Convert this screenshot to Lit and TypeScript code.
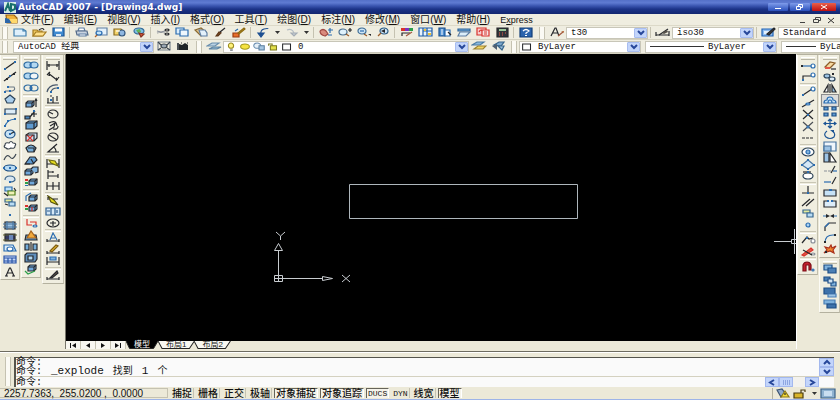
import { LitElement, html, svg, css, nothing } from "lit";
import { customElement, property } from "lit/decorators.js";

// [path data, fill, stroke]
type Shape = [string, string?, string?];

const K = "#26282c";
const B = "#2a6cb0";
const L = "#a9d2f2";
const W = "#ffffff";
const Y = "#f2c230";
const G = "#8a8f98";
const R = "#d8322c";
const N = "none";
const M = "#5f7fa3";

const dot = (x: number, y: number, c = B): Shape => [`M${x - 1} ${y - 1}h2v2h-2z`, c];
const oval = (x: number, y: number, rx: number, ry: number) =>
  `M${x - rx} ${y}a${rx} ${ry} 0 1 0 ${2 * rx} 0a${rx} ${ry} 0 1 0 ${-2 * rx} 0z`;
const cube = (x: number, y: number): Shape[] => [
  [`M${x} ${y + 2}l2-2h6v4l-2 2h-6z`, "#6fa8dc", K],
  [`M${x} ${y + 2}h6v4M${x + 6} ${y + 2}l2-2`, N, K],
];

const ICONS: Record<string, Shape[]> = {
  new: [["M2 2h9l3 2v5H2z", "#dff0fb", "#3f7fae"], ["M11 2v2h3", N, "#3f7fae"]],
  open: [["M2 9V3h4l1 1h4v5z", "#f0c860", "#a27a20"], ["M2 9l3-4h10l-3 4z", "#ffe08a", "#a27a20"], ["M8 3q4-3 5 0", N, K]],
  save: [["M3 1h11v8H3z", "#3f8ad0", "#1c5594"], ["M5 1.500h7v3H5z", W], ["M6 7h5v2H6z", "#d9e8f6"]],
  print: [["M5 1h5l1 3H4z", W, M], ["M2 4h11l1 4H3z", "#c9d3e0", "#546a88"], ["M5 7h7v2H5z", W, M]],
  preview: [["M4 1h10v7H4z", "#e4f1fb", M], [oval(6, 6, 3, 2), "#c2e3f8", B], ["M4 8l-2 2", N, "#b0622a"]],
  publish: [["M2 2h7l3 3-3 3H2z", "#f4d36a", "#8a6d20"], [oval(10, 6, 3, 3), "#8fb7e0", "#34577e"], ["M4 4h4", N, W]],
  globe: [[oval(8, 4, 5, 3), "#7fbfe6", "#356b98"], ["M5 3l4-1 1 3-3 1z", "#5fb35a"], ["M8 6l5 1-3 3z", "#d65a3a", "#843020"]],
  cut: [["M2 4l8 2M2 6l8-2", N, G], [oval(12, 3, 2, 1), N, K], [oval(12, 7, 2, 1), N, K]],
  copy: [["M2 1h8v6H2z", "#dceefb", B], ["M6 3h8v6H6z", "#eef7fd", B]],
  paste: [["M2 3l6-2 5 4-5 4z", "#e0c187", "#8a6a34"], ["M6 3h6l2 3v3H8z", "#e3f1fb", M]],
  match: [["M4 9l3-4 2 1-3 3z", "#7a4a22", "#5a3416"], ["M8 5l5-4", N, K]],
  edit: [["M2 6h6v4H2z", "#e76f2d", "#9b3d12"], ["M7 6l6-5 1 1-6 5z", Y, "#8c6a13"], ["M4 4l3-2", N, B]],
  undo: [["M6 8q-1-5 3-6t4 0", N, "#1d4f91"], ["M3 6h6l-3 4z", "#1d4f91", "#1d4f91"]],
  redo: [["M3 3q5-2 7 3", N, "#b5bdc4"], ["M7 6h6l-3 3z", "#c5ccd2", "#a5adb5"]],
  pan: [["M2 4q3-3 6 0l2 3-3 2q-5-1-5-5", "#d98a7d", "#a14a44"], ["M10 3h5M12 1v5M10 8h4", N, B]],
  zoomrt: [[oval(6, 5, 4, 3), "#dff1fb", "#4a6f90"], ["M9 7l3 2", N, "#9b5a26"], ["M11 3h4M13 1v4", N, K]],
  zoomwin: [[oval(6, 4, 4, 3), "#cfe6f6", "#3e6d96"], ["M8 7l3 2", N, "#9b5a26"], ["M4 4h4", N, B], ["M12 7h3v2z", K]],
  zoomprev: [[oval(9, 4, 4, 3), "#cfe6f6", "#2d5c85"], ["M6 6l-3 3", N, "#9b5a26"], ["M6 4l4-2v4z", K]],
  props: [["M2 1h4v3H2z", R], ["M6 1h4v3H6z", "#7a35c2"], ["M10 1h4v3h-4z", "#2ca04a"], ["M3 9V6h8", N, K], ["M7 9l6-4", "#e6a07a", "#a2563c"]],
  dcenter: [["M1 1h13v8H1z", "#e9f3fc", "#1f5da6"], ["M5 1v8M5 4h9M9 1v8", N, "#1f5da6"], ["M6 2h2v2H6zM10 6h3v2h-3z", Y]],
  palettes: [["M2 1h6v8H2z", "#4d8fd2", "#1b4f8c"], ["M8 3h5v6H8z", W, B], ["M4 3h2M4 5h2M4 7h2", N, W], ["M11 5l3 3", N, K]],
  sheet: [["M2 2h12v2H2z", "#6aa4d8", "#2f669a"], ["M4 5h10l-4 4H2z", "#dbeefa", M]],
  markup: [["M2 1h9v7H2z", "#f8cfcf", R], ["M4 5q2-4 4 0", N, R], ["M7 3h7v6H7z", "#f7e4e4", R], ["M9 5h3M9 7h3", N, R]],
  calc: [["M3 1h11v9H3z", "#31343a", K], ["M5 2h7v2H5z", "#9bc79a"], ["M5 6h1M8 6h1M11 6h1M5 8h1M8 8h1", N, "#e25a4a"]],
  help: [["M2 1h12v9H2z", "#2b64ad", "#123e78"], ["M5 4q3-3 6 0l-3 2v1", N, W], ["M7 8h2v1H7z", W]],
  style: [["M2 9l4-8h1l3 8M4 6h5", N, K], ["M9 9l5-4", N, "#a2563c"], ["M12 4h3v2z", "#b8754c"]],
  dim: [["M1 9V5M1 8h13M14 9V4", N, K], ["M4 8l9-6", N, K], ["M7 6l5-3 1 2-4 2z", "#55504a"]],
  tstyle: [["M1 2h11v7H1z", "#8fbdf0", "#1e62b5"], ["M3 4h7v3H3z", "#e3f0fc"], ["M6 7l7-6 1 1-6 6z", "#444444", K]],
  gear: [["M2 1h12v8H2z", N, "#7a8590"], [oval(8, 5, 3, 2), "#9ba8b5", "#3c4650"], ["M2 1l3 3M14 1l-3 3M2 9l3-2M14 9l-3-2", N, "#3c4650"]],
  flag: [["M2 2h2v7H2z", "#4a5056"], ["M4 3l3 1 3-2 3 2v5H4z", "#1f2428"], ["M6 2h1M12 2h1", N, K]],
  layers: [["M1 5l5-3h7l-4 3z", "#bcd3e4", "#6a8fae"], ["M3 8l4-2h8l-4 2z", "#8fb2cd", "#5c83a3"]],
  layerprev: [["M1 4l5-3h7l-4 3z", "#8ab9de", "#4a7ba3"], ["M3 8l4-3h8l-3 3z", "#f1d564", "#9b8230"]],
  layerstate: [["M4 4l5-3h5l-3 4z", "#7ba7cc", "#37658c"], ["M2 5l5-2v6z", "#4e5f70"], ["M8 5h6l-2 4z", "#9cc0dc", "#37658c"]],
  bulb: [[oval(8, 4, 3, 3), "#fff27a", "#9a8b22"], ["M7 8h3v2H7z", G]],
  sun: [[oval(8, 5, 5, 3), "#f6e341", "#a69b1c"]],
  freeze: [[oval(6, 4, 4, 3), "#e6f0f8", "#6c8fb0"], ["M8 4h6v5H8z", "#a7c7e2", "#5b7f9f"]],
  lock: [["M3 4V2h4v2", N, "#7c7a20"], ["M5 4h7v5H5z", "#e3e04a", "#7c7a20"]],
  swatch: [["M3 2h9v7H3z", W, K]],
  app: [["M2 1h8l3 3v5H3z", "#f1b33b", "#9c6412"], ["M1 4l5 1 1 4H1z", "#2c66a9"], ["M5 5h8v4H8z", "#ffd96b"]],
  // drawing tools
  line: [["M3 9L13 2", N, K], dot(3, 9), dot(13, 2)],
  xline: [["M2 10L14 1", N, K], dot(5, 8, K), dot(12, 3, K), dot(8, 5)],
  pline: [["M3 8h7q4-1 2-4H7", N, "#6b7884"], dot(3, 9), dot(8, 8), dot(6, 4)],
  polygon: [["M8 1l5 4-2 4H5L3 5z", "#a8cdec", "#2b4258"]],
  rect: [["M3 3h11v5H3z", "#dcecf8", "#2b4258"], dot(3, 8), dot(14, 3)],
  arc: [["M3 10q1-7 10-8", N, B], dot(3, 9), dot(13, 2), dot(6, 4)],
  circle: [[oval(8, 5, 5, 4), "#c6e2f6", "#1c4f86"], ["M8 5l4-2", N, K], dot(8, 5)],
  cloud: [["M4 8q-3-1-1-3 0-3 4-2 2-3 4 0 4 0 2 3 0 3-4 2-3 2-5 0z", W, "#3c4650"]],
  spline: [["M2 8q3-7 6-3t6-3", N, "#3c4650"]],
  ellipse: [[oval(8, 5, 6, 3), "#b7dbf4", "#1c4f86"], dot(2, 5), dot(14, 5), dot(8, 5)],
  earc: [["M3 6q0-4 5-4t5 4q-1 2-5 2", "#d8e6f0", "#3d668c"], dot(8, 8)],
  insert: [["M3 1h7v4H3z", "#bfe0f6", B], ["M6 5h7v4H6z", "#eff0b8", "#53801c"], ["M2 7l4 3M12 2l2 3", N, K]],
  block: [["M3 2h7v3H3z", "#e3ea9c", "#36668f"], ["M7 5h6v4H7z", "#b8dcf4", "#36668f"], ["M3 7l3 1", N, K]],
  point: [dot(8, 6)],
  hatch: [["M3 2h10v7H3z", "#9cc3e4", K], ["M1 4h14M1 7h14M5 1v9M11 1v9", N, "#48749e"]],
  gradient: [["M3 2h10v7H3z", "#353a60", K], ["M1 3h14M1 8h14", N, "#5c5c30"], ["M7 3h4v5H7z", "#6b86b6"]],
  region: [["M2 2h9l3 6H2z", "#dcecf8", B], [oval(8, 6, 3, 2), W, B]],
  table: [["M2 2h12v7H2z", "#c6d9f7", "#2a55a8"], ["M2 4h12M2 7h12M6 4v5M10 4v5", N, "#2a55a8"]],
  text: [["M4 10l3.500-8h1L12 10M5.500 7h5", N, K], ["M3 10h3M10 10h3", N, K]],
  // solids
  union: [[oval(5, 5, 4, 3), "#b3d8f2", "#2d6ba1"], [oval(11, 5, 4, 3), "#b3d8f2", "#2d6ba1"], ["M8 3v5", N, B]],
  subtract: [[oval(5, 5, 4, 3), "#b3d8f2", "#2d6ba1"], [oval(11, 5, 4, 3), "#f2f6f8", "#2d6ba1"]],
  intersect: [[oval(5, 5, 4, 3), N, "#2d6ba1"], [oval(11, 5, 4, 3), N, "#2d6ba1"], [oval(8, 5, 1, 2), B]],
  extrude: [...cube(3, 3), ["M13 9V1M12 3l1-2 1 2", N, K]],
  move3d: [["M2 7h5v3H2z", "#4a86bd", K], ["M8 5h6M11 2v6M7 8l5-6", N, K], dot(11, 2)],
  offset3d: [["M3 3l3-2h8v5l-3 3H3z", "#5f9bd0", K], ["M3 3h8v6M11 3l3-2", N, K]],
  delface: [["M3 3l3-2h8v5l-3 3H3z", "#cfe2f2", K], ["M4 3l6 6M10 3L4 9", N, R], ["M3 3h8v6", N, K]],
  rotface: [["M3 5q5-6 10 0l-2 4H5z", "#75add9", K], ["M5 5h6v4", N, K]],
  taper: [["M2 9l5-7h5l2 3-4 4z", "#5f9bd0", K], ["M8 4l3 5M2 9h5", N, K]],
  copyface: [...cube(2, 3), ["M8 3l2-2h5v5l-3 1", "#7fb2dd", K]],
  colorface: [...cube(6, 2), ["M2 2h3v2H2z", R], ["M2 5h3v2H2z", "#2ca04a"], ["M2 8h3v1H2z", B]],
  copyedge: [...cube(6, 3), ["M3 9V4l5-3", N, B]],
  coloredge: [...cube(6, 2), ["M2 2h3v2H2z", R], ["M2 5h3v2H2z", "#2ca04a"], ["M9 4v4", N, R]],
  imprint: [["M4 1v6h5M7 4h6v4", N, R], [oval(12, 8, 2, 1), W, B]],
  clean: [["M2 10l1-5h10l1 5z", "#5f9bd0", K], ["M4 8l4-7 5 7z", "#f0a93c", "#a7641a"]],
  separate: [["M2 3h4v6H2z", "#75add9", K], ["M10 3h4v6h-4z", "#75add9", K], ["M8 1v9", N, K]],
  shell: [["M2 3l2-2h10v6l-2 3H2z", "#5f8fbd", K], ["M5 4h5v4H5z", "#b3d8f2", K]],
  check: [...cube(5, 1), ["M2 7l3 3 7-3", N, "#2ca04a"]],
  // dimensions
  dlinear: [["M2 1v9M14 1v9M2 5h12M4 4v3M12 4v3", N, K]],
  dalign: [["M3 2l9 7M2 4l3-3M11 10l3-4", N, K], ["M5 2v3H3zM11 6v3h2z", K]],
  darc: [["M2 9q2-8 11-7M6 9q1-4 6-4", N, "#48576a"], dot(6, 9), dot(13, 5)],
  dord: [["M2 9h12M3 9V4M8 9V3M12 7V2M5 2h2", N, K], dot(6, 6)],
  dradius: [[oval(8, 5, 5, 4), N, K], ["M8 5L4 3", N, K]],
  djog: [["M4 3q7-4 8 3M13 6q0 4-5 3M5 6l5-3-1 4-5 3", N, K]],
  ddiam: [[oval(8, 5, 5, 4), N, K], ["M4 3l8 5", N, K]],
  dang: [["M12 1L3 9h11M8 4q3 1 3 5", N, K]],
  dquick: [["M2 1v9M14 1v9M2 6h12", N, K], ["M4 2l6 1 3 5-7-3z", "#e6dc1e", "#6d6a10"]],
  dbase: [["M3 1v9M3 3h5M3 7h10M8 2v2M13 5v4", N, K]],
  dcont: [["M2 2v8M8 2v8M14 2v8M2 6h12", N, K]],
  dlead: [["M3 1l6 4 4 5-7-3z", "#e6dc1e", "#55520c"], ["M8 4h5M3 2v3", N, K]],
  dtol: [["M1 2h14v7H1z", "#d5e8f7", "#2a5a8c"], ["M6 2v7M10 2v7M2 5h3M12 4v3", N, "#2a5a8c"]],
  dcenter2: [[oval(8, 5, 6, 4), N, K], ["M8 3v5M5 5h6", N, K]],
  dedit: [["M2 9h12M2 7v3M14 7v3", N, K], ["M5 8l3-7 4 7M6 6h4", N, B]],
  dtedit: [["M2 9h12M2 7v3M14 7v3", N, K], ["M5 7l6-6 2 1-6 6z", Y, "#7d5c12"]],
  dupdate: [["M2 2v8M14 2v8M2 7h12", N, K], ["M5 2h6v3H5z", "#7fb2dd", B]],
  dstyle: [["M2 9h12M2 7v3M14 7v3", N, K], ["M5 8l7-7 1 2-6 5z", "#6e5a4a", K]],
  // snaps
  track: [["M2 6h10", N, B], dot(2, 6, K), [oval(13, 6, 2, 2), W, B]],
  from: [["M3 10V5h8", N, K], dot(3, 9), [oval(13, 4, 2, 2), W, B]],
  endpt: [["M3 9l9-6", N, K], [oval(13, 3, 2, 2), W, B], dot(3, 9)],
  midpt: [["M2 9L14 2", N, K], [oval(8, 6, 2, 1), L, B]],
  inter: [["M3 1l10 9M13 1L3 10", N, K], dot(8, 6)],
  appint: [["M3 1l10 9M13 1L3 10", N, "#4a4f55"], [oval(8, 6, 1, 1), W, B]],
  ext: [["M2 6h3M6 6h3M10 6h3", N, K]],
  center: [[oval(8, 5, 6, 4), W, "#2b4258"], [oval(8, 5, 2, 2), "#7fb2dd", B]],
  quad: [["M8 1l6 5-6 4-6-4z", "#d5e8f7", "#48749e"], dot(8, 1), dot(14, 6), dot(8, 10), dot(2, 6)],
  tangent: [[oval(8, 6, 5, 3), W, "#2b4258"], ["M3 2h8", N, K], dot(8, 2)],
  perp: [["M8 1v7M2 8h12", N, K], dot(8, 8)],
  parallel: [["M2 9l8-7M6 9l8-7", N, K]],
  sinsert: [["M3 2h7v3H3z", "#e3ea9c", "#36668f"], ["M7 5h6v4H7z", "#b8dcf4", "#36668f"]],
  node: [[oval(8, 5, 2, 2), L, B]],
  nearest: [["M2 9l5-6 2 2 4-1", N, K], [oval(13, 7, 2, 2), W, G], dot(7, 4)],
  nosnap: [["M2 9l9-7 2 2-9 6z", "#e25a4a", R], [oval(13, 8, 2, 1), W, G], ["M3 4l9 5", N, K]],
  magnet: [["M3 10V4q1-3 4-3t4 3v5H9V4H6v6z", "#c8202c", "#7e0f18"], [oval(13, 9, 1, 1), W, B]],
  // modify
  erase: [["M3 7l5-5 5 1-5 5z", "#f6d9a0", "#8a5c28"], ["M3 7h5v2H3z", "#e2574a"], ["M9 9h5", N, K]],
  mcopy: [[oval(5, 4, 3, 2), "#9cc3e4", "#2b4258"], [oval(10, 7, 3, 2), "#dcecf8", "#2b4258"], dot(11, 2, K)],
  mirror: [["M6 2v7H2z", W, K], ["M10 2v7h4z", "#9cc3e4", K], ["M8 1v9", N, K]],
  offset: [["M2 8q0-3 3-3 0-3 3-3t3 3q3 0 3 3z", "#c6e2f6", B], ["M6 8q0-3 2-3t2 3", N, B]],
  array: [["M2 1h4v3H2zM10 1h4v3h-4zM2 7h4v3H2zM10 7h4v3h-4z", "#5f9bd0", "#1c4f86"]],
  move: [["M8 1v9M2 5.500h12M6 3l2-2 2 2M6 8l2 2 2-2M4 4L2 5.500 4 7M12 4l2 1.500L12 7", N, "#1c5594"]],
  rotate: [["M5 2q-4 3-1 6 4 3 8 0 2-4-2-6", N, "#1c5594"], ["M8 1h4v3z", "#1c5594"]],
  scale: [["M2 1h12v9H2z", "#eef5fb", "#48749e"], ["M2 5h7v5H2z", "#9cc3e4", "#48749e"]],
  stretch: [["M2 1h5v9H2z", "#9cc3e4", K], ["M8 1l6 9H8z", W, K]],
  trim: [["M2 7h3M6 7h3", N, G], ["M9 9l4-7", N, K], ["M11 7h4", N, B]],
  extend: [["M2 7h7", N, B], ["M10 9l4-7", N, K]],
  breakpt: [["M2 3h12v6H2z", "#c6e2f6", K], ["M7 2h3v2H7z", B]],
  brk: [["M6 3H2v6h12V3h-4", "#dcecf8", K], dot(6, 3), dot(10, 3)],
  join: [["M1 6h5M10 6h5", N, B], ["M4 4l4 2-4 2zM12 4L8 6l4 2z", K]],
  chamfer: [["M3 10V6l4-4h7", N, K], ["M3 6l4-4", N, B]],
  fillet: [["M3 10q0-8 8-8h3", N, B], dot(3, 9, K), dot(13, 2, K)],
  explode: [["M2 9l3-3-2-3 4 1 2-3 1 3 4-2-3 4 1 3-4-2z", "#f0862e", "#a8301c"], dot(4, 8, K)],
  front: [["M2 1h8v5H2z", "#7fb2dd", "#1e4f86"], ["M6 4h8v5H6z", "#4a7fb5", "#1e4f86"]],
  back: [["M2 1h6v4H2z", "#4a7fb5", "#1e4f86"], ["M9 6h5v4H9z", "#7fb2dd", "#1e4f86"], ["M6 3h5v4H6z", "#cfe2f2", "#1e4f86"]],
  above: [["M2 1h11v6H2z", "#3d72ab", "#1e4f86"], ["M6 7h8v3H6z", "#9cc3e4", "#4a7fb5"]],
  under: [["M2 1h11v4H2z", "#7fb2dd", "#4a7fb5"], ["M5 5h9v4H5z", "#3d72ab", "#1e4f86"]],
  // status tray
  tray: [["M2 2l5-1 3 4-4 4z", "#8fa9c9", "#3b5272"], ["M6 9l4-6 4 6z", "#f4dc3a", "#8c7914"], ["M10 5v2", N, K]],
  unlock: [["M9 5V2h4v2", N, "#4a3d10"], ["M2 5h9v5H2z", "#d9b52c", "#4a3d10"]],
  clear: [["M1 1h14v9H1z", "#8fb2d0", "#3d6388"], ["M4 3h8v5H4z", "#c9def0"]],
};

const icon = (name: string) => svg`<svg class="ico" viewBox="0 0 16 11" aria-hidden="true">${(ICONS[name] ?? []).map(
    ([d, f, s]) => svg`<path d=${d} fill=${f ?? "none"} stroke=${s ?? "none"} stroke-width="1.200" />`
  )}</svg>`;

const iconCss = css`
  * { box-sizing: border-box; }
  button { font: inherit; color: inherit; background: none; border: 0; padding: 0; margin: 0; flex: none; }
  .ico { display: block; width: 16px; height: 11px; }
`;

const chevron = (d: string) => svg`<svg class="chev" viewBox="0 0 10 7" aria-hidden="true">
  <path d=${d} fill="none" stroke="#27479a" stroke-width="2" /></svg>`;
const DOWN = "M2 2l3 3 3-3";
const UP = "M2 5l3-3 3 3";
const LEFT = "M7 1L3 3.500 7 6";
const RIGHT = "M3 1l4 2.500L3 6";

@customElement("tool-palette")
class ToolPalette extends LitElement {
  @property() tools = "";
  @property() active = "";
  @property() label = "";

  static styles = [iconCss, css`
    :host {
      display: flex; flex-direction: column; align-items: center; flex: none;
      background: #f0eee0; padding: 2px 0;
      border-right: 1px solid #c2bfae; border-bottom: 1px solid #b4b19f; border-left: 1px solid #fcfbf5;
    }
    .grip { width: 14px; height: 3px; flex: none; border-top: 1px solid #fff; border-bottom: 1px solid #b9b6a5; }
    .list { flex: 1; display: flex; flex-direction: column; justify-content: space-between; align-items: center; }
    .sep { width: 16px; height: 3px; border-top: 1px solid #c9c6b5; border-bottom: 1px solid #fff; }
    .on { background: #dcdcda; outline: 1px solid #8c8c8c; }
  `];

  render() {
    return html`<div class="grip"></div>
      <div class="list" role="toolbar" aria-label=${this.label}>
        ${this.tools.split(" ").map((t) => t === "|"
          ? html`<div class="sep"></div>`
          : html`<button class=${t === this.active ? "on" : ""} aria-label=${t}>${icon(t)}</button>`)}
      </div>`;
  }
}

@customElement("drop-down")
class DropDown extends LitElement {
  @property() value = "";
  @property() label = "";
  @property() icons = "";
  @property() line = "";

  static styles = [iconCss, css`
    :host { display: flex; align-items: center; height: 12px; background: #fff; border: 1px solid #c8c6b8; min-width: 0; }
    .line { flex: none; width: 54px; height: 1px; background: #333; margin-left: 4px; }
    .line.short { width: 30px; }
    select {
      appearance: none; border: 0; outline: 0; background: transparent; color: #111; flex: 1; min-width: 0;
      height: 10px; padding: 0 0 0 4px; line-height: 10px;
      font-family: "Liberation Mono", "Noto Sans CJK SC", monospace; font-size: 9px;
    }
    .arrow { width: 13px; height: 10px; flex: none; display: grid; place-items: center; background: #c3d5fb; border: 1px solid #a8bdf0; border-radius: 1px; }
    .chev { display: block; width: 10px; height: 7px; }
    .ico { width: 14px; height: 10px; flex: none; }
  `];

  render() {
    return html`${this.icons ? this.icons.split(" ").map((i) => icon(i)) : nothing}
      ${this.line ? html`<span class="line ${this.line}"></span>` : nothing}<select aria-label=${this.label}><option>${this.value}</option></select>
      <span class="arrow">${chevron(DOWN)}</span>`;
  }
}

const MENUS: [string, string][] = [
  ["文件", "F"], ["编辑", "E"], ["视图", "V"], ["插入", "I"], ["格式", "O"], ["工具", "T"],
  ["绘图", "D"], ["标注", "N"], ["修改", "M"], ["窗口", "W"], ["帮助", "H"],
];

const STATUS: [string, boolean][] = [
  ["捕捉", false], ["栅格", false], ["正交", false], ["极轴", false], ["对象捕捉", true],
  ["对象追踪", true], ["DUCS", true], ["DYN", false], ["线宽", false], ["模型", true],
];

const STANDARD = "new open save | print preview publish globe | cut copy paste match edit | undo v redo v | pan zoomrt zoomwin zoomprev | props dcenter palettes sheet markup calc | help";

@customElement("app-root")
class AppRoot extends LitElement {
  static styles = [iconCss, css`
    :host {
      display: flex; flex-direction: column; height: 100vh; overflow: hidden; background: #ece9d8; color: #111;
      font-family: "Liberation Sans", "Noto Sans CJK SC", sans-serif; font-size: 10px;
    }
    .title {
      flex: none; height: 14px; display: flex; align-items: center; padding: 0 4px; gap: 2px; color: #fff;
      background: linear-gradient(#5470c8, #5f7bd2 20%, #3a55b0 42%, #1c3388 65%, #122670);
    }
    .title h1 { margin: 0; flex: 1; font: bold 9px/14px "DejaVu Sans", sans-serif; white-space: nowrap; }
    .logo { width: 12px; height: 11px; }
    .win { width: 20px; height: 8px; background: linear-gradient(#7f9cea, #2a50bc); border-radius: 1px; display: grid; place-items: center; }
    .win.close { width: 24px; background: linear-gradient(#e8604c, #c01010); }
    .win svg, .mdi svg { display: block; width: 10px; height: 8px; }
    .menu { flex: none; height: 12px; display: flex; align-items: center; gap: 10px; padding: 0 4px; background: #efede0; border-bottom: 1px solid #dcd9c8; }
    .menu button { line-height: 10px; white-space: nowrap; }
    .menu .latin { font-size: 9px; }
    .menu .doc { margin-right: -9px; }
    .mdi { margin-left: auto; display: flex; gap: 4px; }
    .bar { flex: none; height: 14px; display: flex; align-items: center; padding-left: 2px; background: #efede0; border-bottom: 1px solid #d4d1c0; overflow: hidden; white-space: nowrap; }
    .bar > * { flex: none; }
    .grip { width: 6px; height: 12px; margin-right: 2px; border: solid #c5c2b1; border-width: 0 1px; background: #fbfaf4; }
    .tool { width: 19px; display: grid; place-items: center; }
    .more { width: 10px; display: grid; place-items: center; }
    .more svg { display: block; width: 5px; height: 3px; }
    .vsep { width: 1px; height: 11px; margin: 0 2px; background: #c5c2b1; }
    .gap { margin-left: 4px; }
    .w-style { width: 82px; }
    .w-work { width: 141px; margin-left: 3px; }
    .w-layer { width: 246px; }
    .w-color { width: 122px; }
    .w-line { width: 132px; margin-left: 4px; }
    .main { flex: 1; display: flex; min-height: 0; }
    .dock { flex: none; display: flex; align-items: flex-start; gap: 1px; border-top: 1px solid #b4b19f; }
    .dock.left { padding-right: 1px; border-right: 1px solid #77756a; }
    .dock.right { border-left: 1px solid #fff; }
    .stack { display: flex; flex-direction: column; gap: 1px; }
    .p-draw { width: 20px; height: 225px; }
    .p-solid { width: 20px; height: 223px; }
    .p-dim { width: 22px; height: 229px; }
    .p-snap { width: 21px; height: 220px; }
    .p-mod { width: 21px; height: 203px; }
    .p-order { width: 21px; height: 54px; }
    .view { flex: 1; min-width: 0; display: flex; flex-direction: column; }
    .canvas { flex: 1; min-height: 0; width: 100%; display: block; background: #000; }
    .tabs { flex: none; height: 8px; display: flex; background: #ece9d8; font-size: 8px; }
    .nav { width: 15px; height: 8px; background: #f8f7f0; border-right: 1px solid #c5c2b1; display: grid; place-items: center; }
    .nav svg { display: block; width: 8px; height: 5px; }
    .tab { position: relative; height: 8px; padding: 0 8px; line-height: 8px; white-space: nowrap; }
    .tab svg { position: absolute; inset: 0; width: 100%; height: 8px; }
    .tab span { position: relative; display: block; line-height: 8px; }
    .tab.on { color: #fff; }
    .split { flex: none; height: 6px; margin-top: 2px; border-top: 1px solid #6d6b60; }
    .split::after { content: ""; display: block; height: 1px; background: #fff; }
    .cmd { flex: none; display: flex; height: 30px; padding: 0 6px 0 5px; }
    .cmd .grip { height: 29px; margin-right: 3px; }
    .console {
      flex: 1; display: flex; flex-direction: column; min-width: 0; background: #fafafa; border: solid #55544c; border-width: 1px 0 0 2px;
      font-family: "Liberation Mono", "Noto Sans CJK SC", monospace; font-size: 10px; line-height: 9px;
    }
    .mono { font-size: 11px; }
    .hist { flex: none; height: 19px; display: flex; border-bottom: 1px solid #d4d1c0; }
    .log { flex: 1; min-width: 0; }
    .row { height: 9px; display: flex; gap: 9px; white-space: nowrap; }
    .entry { flex: none; height: 10px; display: flex; align-items: center; }
    .entry input { flex: 1; min-width: 0; border: 0; outline: 0; padding: 0; background: transparent; font: inherit; height: 9px; }
    .vscroll { width: 15px; display: flex; flex-direction: column; }
    .hscroll { display: flex; width: 54px; height: 10px; margin-right: 15px; background: #f3f2ee; }
    .sb { flex: 1; display: grid; place-items: center; background: #c3d5fb; border: 1px solid #a3b8ee; }
    .hscroll .sb { flex: none; width: 14px; }
    .hscroll .last { margin-left: auto; }
    .chev { display: block; width: 10px; height: 7px; }
    .status { flex: none; display: flex; align-items: center; gap: 2px; height: 13px; padding-right: 4px; border-bottom: 1px solid #9db4e8; }
    .coord { width: 168px; height: 10px; padding-left: 4px; line-height: 9px; border: 1px solid #c5c2b1; border-left: 0; white-space: pre; }
    .mode { height: 10px; line-height: 9px; padding: 0 1px; border-right: 1px solid #c5c2b1; border-left: 1px solid transparent; font-weight: 500; white-space: nowrap; }
    .mode.latin { font-family: "Liberation Mono", monospace; font-size: 8px; }
    .mode.on { border: solid #66645a; border-width: 1px 0 0 1px; border-right: 1px solid #fff; background: #f5f3ea; line-height: 8px; }
    .tray { margin-left: auto; display: flex; align-items: center; gap: 1px; border-left: 1px solid #b4b19f; padding-left: 2px; }
  `];

  private winGlyph(d: string, c: string) {
    return svg`<svg viewBox="0 0 10 8" aria-hidden="true"><path d=${d} fill="none" stroke=${c} /></svg>`;
  }

  private tool(t: string) {
    if (t === "|") return html`<span class="vsep"></span>`;
    if (t === "v") return html`<button class="more" aria-label="more"><svg viewBox="0 0 5 3"><path d="M0 0h5L2.500 3z" fill="#333" /></svg></button>`;
    return html`<button class="tool" aria-label=${t}>${icon(t)}</button>`;
  }

  private nav(d: string, label: string) {
    return html`<button class="nav" aria-label=${label}><svg viewBox="0 0 8 5"><path d=${d} fill="#111" /></svg></button>`;
  }

  private tab(name: string, on = false) {
    return html`<button class="tab ${on ? "on" : ""}"><svg viewBox="0 0 36 8" preserveAspectRatio="none" aria-hidden="true">
      <path d="M0 0l4 7.500h27L36 0" fill=${on ? "#000" : "#f8f7f0"} stroke="#222" /></svg><span>${name}</span></button>`;
  }

  render() {
    return html`
      <header class="title">
        <svg class="logo" viewBox="0 0 12 11" aria-hidden="true">
          <path d="M0 0h12v11H0z" fill="#d6ece8" /><path d="M1 9l3-7 2 7M7 2v7l4-2V3z" fill="none" stroke="#17706c" stroke-width="2" />
        </svg>
        <h1>AutoCAD 2007 - [Drawing4.dwg]</h1>
        <button class="win" aria-label="minimize">${this.winGlyph("M2 5.500h6", W)}</button>
        <button class="win" aria-label="restore">${this.winGlyph("M3.500 3V1.500h4v3H6M1.500 3.500h4v3h-4z", W)}</button>
        <button class="win close" aria-label="close">${this.winGlyph("M2 2l6 4M8 2L2 6", W)}</button>
      </header>
      <nav class="menu">
        <span class="doc">${icon("app")}</span>
        ${MENUS.map(([n, k]) => html`<button>${n}(<u>${k}</u>)</button>`)}
        <button class="latin">E<u>x</u>press</button>
        <span class="mdi">
          <button aria-label="minimize drawing">${this.winGlyph("M2 6.500h5", "#444")}</button>
          <button aria-label="restore drawing">${this.winGlyph("M3.500 3V1.500h5v3H7M1.500 3.500h5v3h-5z", "#444")}</button>
          <button aria-label="close drawing">${this.winGlyph("M2 2l6 5M8 2L2 7", "#333")}</button>
        </span>
      </nav>
      <div class="bar">
        <span class="grip"></span>
        ${STANDARD.split(" ").map((t) => this.tool(t))}
        <span class="grip gap"></span>
        ${this.tool("style")}<drop-down class="w-style" label="Text style" value="t30"></drop-down>
        <span class="vsep"></span>${this.tool("dim")}<drop-down class="w-style" label="Dimension style" value="iso30"></drop-down>
        <span class="vsep"></span>${this.tool("tstyle")}<drop-down class="w-style" label="Table style" value="Standard"></drop-down>
      </div>
      <div class="bar">
        <span class="grip"></span>
        <drop-down class="w-work" label="Workspace" value="AutoCAD 经典"></drop-down>
        ${this.tool("gear")}${this.tool("flag")}
        <span class="grip gap"></span>
        ${this.tool("layers")}
        <drop-down class="w-layer" label="Layer" icons="bulb sun freeze lock swatch" value="0"></drop-down>
        ${this.tool("layerprev")}${this.tool("layerstate")}
        <span class="grip gap"></span>
        <drop-down class="w-color" label="Color" icons="swatch" value="ByLayer"></drop-down>
        <drop-down class="w-line" label="Linetype" line="long" value="ByLayer"></drop-down>
        <drop-down class="w-line" label="Lineweight" line="short" value="ByLayer"></drop-down>
      </div>
      <main class="main">
        <div class="dock left">
          <tool-palette class="p-draw" label="Draw"
            tools="line xline pline polygon rect arc circle cloud spline ellipse earc insert block point hatch gradient region table text"></tool-palette>
          <tool-palette class="p-solid" label="Solids editing"
            tools="union subtract intersect | extrude move3d offset3d delface rotface taper copyface colorface | copyedge coloredge | imprint clean separate shell check"></tool-palette>
          <tool-palette class="p-dim" label="Dimension"
            tools="dlinear dalign darc dord | dradius djog ddiam dang | dquick dbase dcont | dlead dtol dcenter2 | dedit dtedit dupdate | dstyle"></tool-palette>
        </div>
        <div class="view">
          <svg class="canvas" viewBox="0 0 730 287" role="img" aria-label="Drawing">
            <g fill="none" stroke="#c8ccd0">
              <path d="M283.500 130.500h228v34h-228z" stroke="#aeb6bc" />
              <path d="M208.500 227.500h8v-6h-8zM212.500 227.500V196M208.500 224.500H256M208.500 196.500l4-7 4 7zM256.500 222.500l10 2-10 2z" />
              <path d="M210 178l4.500 4 4.500-4M214.500 182v4M276 221l8 7M284 221l-8 7" />
              <path d="M708 187.500h17M728.500 175v25M725.500 185.500h5v4h-5z" />
            </g>
          </svg>
          <div class="tabs">
            ${this.nav("M1 0h1v5H1zM7 0v5L3 2.500z", "first")}${this.nav("M6 0v5L2 2.500z", "previous")}
            ${this.nav("M2 0v5l4-2.500z", "next")}${this.nav("M1 0v5l4-2.500zM6 0h1v5H6z", "last")}
            ${this.tab("模型", true)}${this.tab("布局1")}${this.tab("布局2")}
          </div>
        </div>
        <div class="dock right">
          <tool-palette class="p-snap" label="Object snap"
            tools="track from | endpt midpt inter appint ext | center quad tangent | perp parallel sinsert node | nearest nosnap | magnet"></tool-palette>
          <div class="stack">
            <tool-palette class="p-mod" label="Modify" active="offset"
              tools="erase mcopy mirror offset array move rotate scale stretch trim extend breakpt brk join chamfer fillet explode"></tool-palette>
            <tool-palette class="p-order" label="Draw order" tools="front back above under"></tool-palette>
          </div>
        </div>
      </main>
      <div class="split"></div>
      <section class="cmd">
        <span class="grip"></span>
        <div class="console">
          <div class="hist">
            <div class="log">
              <div class="row">命令:</div>
              <div class="row"><span>命令:</span><span class="mono">_explode</span><span>找到</span><span class="mono">1</span><span>个</span></div>
            </div>
            <div class="vscroll">
              <button class="sb" aria-label="scroll up">${chevron(UP)}</button>
              <button class="sb" aria-label="scroll down">${chevron(DOWN)}</button>
            </div>
          </div>
          <div class="entry">
            <label for="cmd">命令:</label><input id="cmd" />
            <div class="hscroll">
              <button class="sb" aria-label="scroll left">${chevron(LEFT)}</button>
              <button class="sb" aria-label="thumb"><svg class="chev" viewBox="0 0 10 7"><path d="M2.500 1v5M4.500 1v5M6.500 1v5M8.500 1v5" stroke="#8ea6e0" /></svg></button>
              <button class="sb last" aria-label="scroll right">${chevron(RIGHT)}</button>
            </div>
          </div>
        </div>
      </section>
      <footer class="status">
        <span class="coord">2257.7363,  255.0200 ,  0.0000</span>
        ${STATUS.map(([n, on]) => html`<button class="mode ${on ? "on" : ""} ${n[0] === "D" ? "latin" : ""}" aria-pressed=${on}>${n}</button>`)}
        <span class="tray">${icon("tray")}${icon("unlock")}${this.tool("v")}<button aria-label="clean screen">${icon("clear")}</button></span>
      </footer>
    `;
  }
}
